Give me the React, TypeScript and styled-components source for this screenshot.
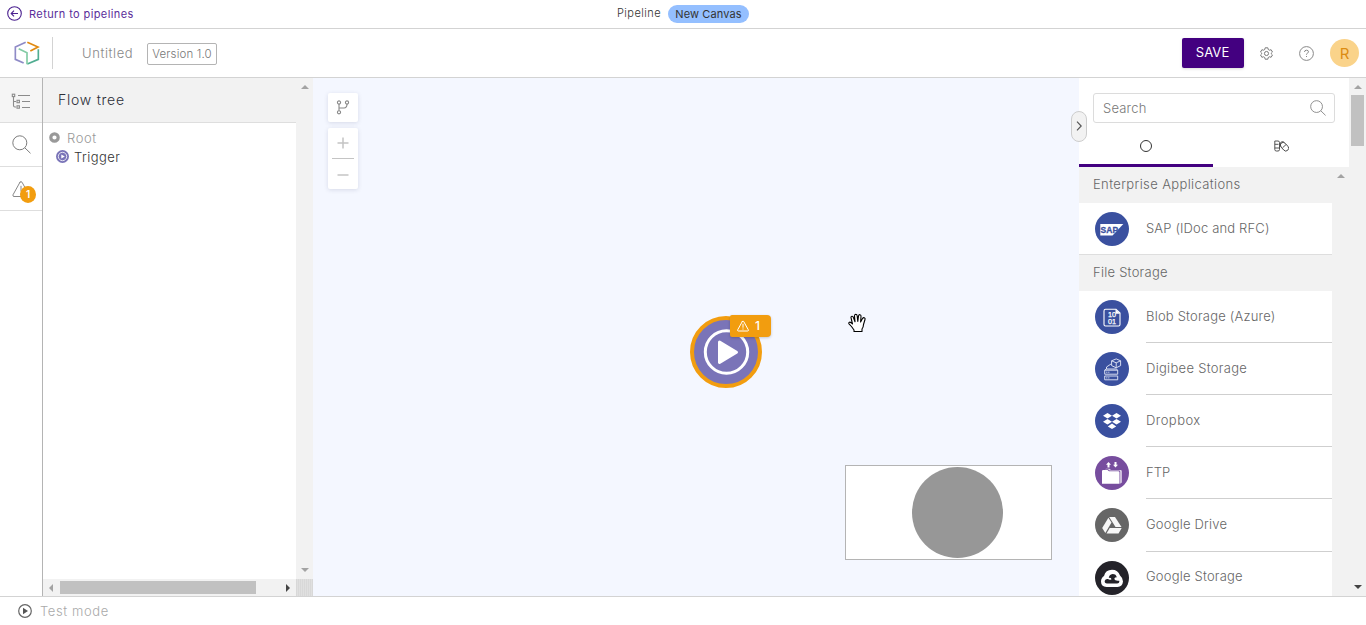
import React from "react";
import styled, { createGlobalStyle } from "styled-components";

const GlobalStyle = createGlobalStyle`
  * { box-sizing: border-box; }
  html, body { margin: 0; overflow: hidden; }
  body {
    font-family: Inter, "Open Sans", "Liberation Sans", sans-serif;
    font-weight: 300;
    color: #666;
    background: #fff;
  }
  svg { display: block; flex: none; }
`;

const Page = styled.div`
  display: flex;
  flex-direction: column;
  width: 1366px;
  height: 625px;
  background: #fff;
`;

const Label = styled.span<{ $size: number; $spacing?: number; $color?: string; $weight?: number }>`
  font-size: ${(p) => p.$size}px;
  letter-spacing: ${(p) => p.$spacing ?? 0}px;
  color: ${(p) => p.$color ?? "#666"};
  font-weight: ${(p) => p.$weight ?? 300};
  line-height: 18px;
  white-space: nowrap;
`;

const TopBar = styled.header`
  display: grid;
  grid-template-columns: 617px 1fr;
  height: 29px;
  flex: none;
  border-bottom: 1px solid #d3d3d3;
`;

const ReturnLink = styled.a`
  display: flex;
  align-items: center;
  gap: 7px;
  padding: 0 0 1px 7px;
`;

const Crumb = styled.div`
  display: flex;
  align-items: center;
  gap: 7px;
  padding-bottom: 1px;
`;

const CrumbText = styled.div`
  display: flex;
  width: 44px;
  padding-bottom: 2px;
`;

const CanvasPill = styled.div`
  display: flex;
  align-items: center;
  justify-content: center;
  width: 81px;
  height: 18px;
  border-radius: 9px;
  background: #94bfff;
`;

const Header = styled.div`
  display: flex;
  align-items: center;
  height: 49px;
  flex: none;
  border-bottom: 1px solid #d3d3d3;
`;

const LogoBox = styled.div`
  display: flex;
  align-items: center;
  width: 53px;
  height: 32px;
  padding-left: 14px;
  border-right: 1px solid #d3d3d3;
`;

const Title = styled.div`
  display: flex;
  width: 94px;
  padding: 0 0 1px 29px;
`;

const Version = styled.div`
  display: flex;
  align-items: center;
  justify-content: center;
  width: 70px;
  height: 22px;
  margin-top: 2px;
  border: 1px solid #b4b4b4;
  border-radius: 2px;
`;

const HeaderActions = styled.div`
  display: flex;
  align-items: center;
  margin-left: auto;
  padding-right: 7px;
`;

const SaveButton = styled.button`
  width: 62px;
  height: 30px;
  margin-right: 16px;
  padding: 0 1px 2px 0;
  border: 0;
  border-radius: 2px;
  background: #430080;
  box-shadow: 0 1px 3px rgba(0, 0, 0, 0.15);
  color: #fff;
  font: 400 13px Inter, sans-serif;
  letter-spacing: 0.1px;
`;

const HelpSlot = styled.div`
  margin: 0 16px 0 26px;
`;

const Avatar = styled.div`
  display: flex;
  align-items: center;
  justify-content: center;
  width: 29px;
  height: 28px;
  border-radius: 50%;
  background: #fad38a;
  color: #dc8c12;
  font-size: 15px;
  font-weight: 400;
`;

const Main = styled.main`
  display: flex;
  height: 518px;
  flex: none;
`;

const Rail = styled.nav`
  width: 43px;
  border-right: 1px solid #b4b4b4;
`;

const RailItem = styled.div<{ $active?: boolean; $h: number }>`
  position: relative;
  display: flex;
  align-items: center;
  height: ${(p) => p.$h}px;
  padding: ${(p) => (p.$active ? "2px 0 0 11px" : "0 0 0 12px")};
  background: ${(p) => (p.$active ? "#f5f5f5" : "#fff")};
  border-bottom: 1px solid #dedede;
`;

const RailBadge = styled.span`
  position: absolute;
  left: 20px;
  top: 19px;
  width: 16px;
  height: 17px;
  border-radius: 50%;
  background: #f29d0f;
  color: #fff;
  font-size: 10px;
  font-weight: 600;
  line-height: 17px;
  text-align: center;
`;

const TreePanel = styled.aside`
  display: grid;
  grid-template-columns: 253px 17px;
  grid-template-rows: 501px 17px;
`;

const TreeHeader = styled.div`
  display: flex;
  align-items: center;
  height: 45px;
  padding-left: 15px;
  background: #f2f2f2;
  border-bottom: 1px solid #dedede;
`;

const TreeBody = styled.div`
  padding: 5px 0 0 6px;
`;

const TreeNode = styled.div<{ $indent: number; $gap: number }>`
  display: flex;
  align-items: center;
  gap: ${(p) => p.$gap}px;
  height: 19px;
  padding-left: ${(p) => p.$indent}px;
`;

const ScrollV = styled.div`
  display: flex;
  flex-direction: column;
  align-items: center;
  justify-content: space-between;
  padding: 7px 0;
  background: #f2f2f2;
`;

const ScrollH = styled.div`
  display: flex;
  align-items: center;
  padding: 0 6px;
  background: #f2f2f2;
`;

const ThumbH = styled.div`
  width: 196px;
  height: 13px;
  margin: 0 auto 0 7px;
  background: #c1c1c1;
`;

const Corner = styled.div`
  background: repeating-linear-gradient(90deg, #d8d8d8 0 1px, #e0e0e0 1px 2px);
`;

const Canvas = styled.section`
  position: relative;
  width: 766px;
  padding: 15px;
  background: #f4f7ff;
`;

const ToolCard = styled.div<{ $h: number }>`
  display: flex;
  flex-direction: column;
  align-items: center;
  justify-content: center;
  width: 30px;
  height: ${(p) => p.$h}px;
  margin-bottom: 6px;
  background: #fff;
  border-radius: 2px;
  box-shadow: 0 1px 4px rgba(60, 70, 110, 0.16);
`;

const ZoomButton = styled.div<{ $line?: boolean }>`
  display: flex;
  align-items: center;
  justify-content: center;
  width: 22px;
  height: ${(p) => (p.$line ? 31 : 30)}px;
  padding-top: ${(p) => (p.$line ? 0 : 2)}px;
  border-bottom: ${(p) => (p.$line ? "1px solid #c4c4c4" : "0")};
`;

const TriggerNode = styled.div`
  position: absolute;
  left: 377px;
  top: 238px;
  width: 72px;
  height: 72px;
`;

const NodeBadge = styled.div`
  position: absolute;
  left: 40px;
  top: -1px;
  display: flex;
  align-items: center;
  gap: 6px;
  width: 41px;
  height: 22px;
  padding-left: 7px;
  border-radius: 2px 4px 4px 2px;
  background: #f29d0f;
  box-shadow: 0 1px 3px rgba(0, 0, 0, 0.2);
`;

const HandCursor = styled.svg`
  position: absolute;
  left: 535px;
  top: 235px;
`;

const MiniMap = styled.div`
  position: absolute;
  left: 532px;
  top: 387px;
  width: 207px;
  height: 95px;
  padding: 1px 0 0 66px;
  background: #fff;
  border: 1px solid #b4b4b4;
`;

const MiniDot = styled.div`
  width: 91px;
  height: 91px;
  border-radius: 50%;
  background: #979797;
`;

const SidePanel = styled.aside`
  position: relative;
  display: flex;
  width: 287px;
`;

const Collapse = styled.div`
  position: absolute;
  z-index: 1;
  left: -8px;
  top: 33px;
  display: flex;
  align-items: center;
  justify-content: center;
  width: 16px;
  height: 31px;
  padding-bottom: 1px;
  border: 1px solid #cdcdcd;
  border-radius: 8px;
  background: #f2f2f2;
`;

const SideContent = styled.div`
  width: 270px;
  height: 518px;
  overflow: hidden;
`;

const SearchBox = styled.div`
  display: flex;
  align-items: center;
  justify-content: space-between;
  width: 242px;
  height: 30px;
  margin: 15px 0 0 14px;
  padding: 0 8px 0 9px;
  border: 1px solid #dcdcdc;
  border-radius: 3px;
`;

const Tabs = styled.div`
  display: grid;
  grid-template-columns: 134px 136px;
  height: 44px;
`;

const Tab = styled.div<{ $active?: boolean }>`
  display: flex;
  align-items: center;
  justify-content: center;
  padding-top: 5px;
  border-bottom: 3px solid ${(p) => (p.$active ? "#430080" : "transparent")};
`;

const ListArea = styled.div`
  display: grid;
  grid-template-columns: 253px 17px;
  height: 429px;
`;

const List = styled.div`
  height: 429px;
  overflow: hidden;
`;

const SectionTitle = styled.div`
  display: flex;
  align-items: center;
  height: 36px;
  padding: 0 0 3px 14px;
  background: #f2f2f2;
`;

const Row = styled.div<{ $h: number; $full?: boolean }>`
  display: flex;
  gap: 16px;
  height: ${(p) => p.$h}px;
  padding-left: 16px;
  border-bottom: ${(p) => (p.$full ? "1px solid #dedede" : "0")};
`;

const RowIcon = styled.div`
  display: flex;
  align-items: center;
`;

const RowText = styled.div<{ $line?: boolean }>`
  display: flex;
  flex: 1;
  align-items: center;
  padding-bottom: 2px;
  margin-left: 1px;
  border-bottom: ${(p) => (p.$line ? "1px solid #cfcfcf" : "0")};
`;

const ScrollRight = styled.div`
  display: flex;
  flex-direction: column;
  align-items: center;
  width: 17px;
  padding: 7px 0;
  background: #f2f2f2;
`;

const ThumbV = styled.div`
  width: 13px;
  height: 51px;
  margin: 6px 0 auto;
  background: #c1c1c1;
`;

const Footer = styled.footer`
  display: flex;
  align-items: center;
  gap: 8px;
  height: 29px;
  flex: none;
  padding: 0 0 1px 18px;
  border-top: 1px solid #d3d3d3;
`;

type Dir = "up" | "down" | "left" | "right";
const arrowPoints: Record<Dir, string> = {
  up: "0,6 4,2 8,6",
  down: "0,2 8,2 4,6",
  left: "6,0 2,4 6,8",
  right: "2,0 6,4 2,8",
};

function Arrow({ dir, color = "#a3a3a3" }: { dir: Dir; color?: string }) {
  const vertical = dir === "up" || dir === "down";
  return (
    <svg width={vertical ? 8 : 4} height={vertical ? 4 : 8} viewBox={vertical ? "0 2 8 4" : "2 0 4 8"}>
      <polygon points={arrowPoints[dir]} fill={color} />
    </svg>
  );
}

function SearchIcon({ size }: { size: number }) {
  return (
    <svg width={size} height={size} viewBox="0 0 19 19" fill="none" stroke="#7c7c7c" strokeWidth="1">
      <circle cx="7.8" cy="7.8" r="7" />
      <path d="M12.9 12.9 18.5 18.3" />
    </svg>
  );
}

function WarningIcon({ size, color, width }: { size: number; color: string; width: number }) {
  return (
    <svg width={size} height={size} viewBox="0 0 18 18" fill="none" stroke={color} strokeWidth={width} strokeLinejoin="round" strokeLinecap="round">
      <path d="M8 2.2 1 14.8Q.5 16.5 2 16.5H16Q17.5 16.5 17 14.8L10 2.2Q9 .8 8 2.2Z" />
      <path d="M9 6.2V11M9 13.3V13.8" />
    </svg>
  );
}

function CubeLogo() {
  return (
    <svg width="26" height="26" viewBox="0 0 78 78" fill="none" strokeWidth="5">
      <path d="M35 7 4 21V58L29 69" stroke="#8f8bc7" />
      <path d="M40 7 72 21 49 33" stroke="#e08a10" />
      <path d="M73 28V58L40 72" stroke="#50ad91" />
      <path d="M14 26 39 38V73" stroke="#83cba5" />
    </svg>
  );
}

type Kind = "sap" | "blob" | "digibee" | "dropbox" | "ftp" | "drive" | "gcs";

const discColors: Record<Kind, string> = {
  sap: "#3a509f",
  blob: "#3a509f",
  digibee: "#3a509f",
  dropbox: "#3a509f",
  ftp: "#774d9e",
  drive: "#666666",
  gcs: "#242329",
};

function Glyph({ kind }: { kind: Kind }) {
  switch (kind) {
    case "sap":
      return (
        <>
          <path d="M5.3 12H28.300L17.500 23.500H5.300Z" fill="#fff" />
          <text x="5.600" y="21" fill="#3a509f" stroke="#3a509f" strokeWidth=".3" fontFamily="Liberation Sans, sans-serif" fontWeight="700" fontSize="9.500" textLength="17.500" lengthAdjust="spacingAndGlyphs">SAP</text>
        </>
      );
    case "blob":
      return (
        <g fill="#fff">
          <path d="M10.500 9.300H21L25 13V24.500Q25 26 23.500 26H10.500Q9 26 9 24.500V11Q9 9.300 10.500 9.300Z" fill="none" stroke="#fff" strokeWidth="1.100" />
          <path d="M20.500 9.300 25.200 13.800H20.500Z" />
          <text x="13" y="17.200" stroke="#fff" strokeWidth=".25" fontFamily="Liberation Sans, sans-serif" fontSize="7.200">10</text>
          <text x="13" y="24.100" stroke="#fff" strokeWidth=".25" fontFamily="Liberation Sans, sans-serif" fontSize="7.200">01</text>
        </g>
      );
    case "digibee":
      return (
        <g fill="none" stroke="#e6eaf8" strokeWidth="0.900" strokeLinejoin="round">
          <path d="M9.700 18.200 11.200 17H21.200L22.700 18.200M9.700 18.200H22.700V22.200H9.700ZM9.700 24H22.700V27.800H9.700Z" />
          <path d="M11.200 20.200H14.500M11.200 25.900H14.500" strokeDasharray="1.200 .8" />
          <path d="M21.200 6.900 25.600 8.800V13.600L21.200 15.800 16.600 13.600V8.800ZM16.600 8.800 21.200 10.800 25.600 8.800M21.200 10.800V15.800M16 12 11.500 15V17" />
        </g>
      );
    case "dropbox":
      return (
        <path fill="#fff" d="m12.500 9 4.500 2.800-4.500 2.800L8 11.800ZM21.500 9l4.500 2.800-4.500 2.800-4.500-2.800ZM12.500 15l4.500 2.800-4.500 2.800L8 17.800ZM21.500 15l4.500 2.800-4.500 2.800-4.500-2.800ZM17 19.600l4.200 2.800L17 25.100l-4.200-2.700Z" />
      );
    case "ftp":
      return (
        <g fill="#fff">
          <path d="M7 15Q7 13.900 8.200 13.900H12.500L14 15.300H23.300Q24.500 15.300 24.500 16.500V27.700H7Z" />
          <path d="M10 13.200Q10.400 12.600 11.400 12.700H14.500L16 13.900H25.500Q26.800 13.900 26.800 15.200V26.500L25.200 27.700V15.700Q25.200 14.600 24 14.600H14.600L13 13.200Z" opacity=".8" />
          <path d="M13.500 6 16 8.700H14.500V11.400H12.500V8.700H11ZM19.500 6H21.500V8.700H23L20.500 11.500 18 8.700H19.500Z" />
        </g>
      );
    case "drive":
      return (
        <g fill="#f7f7f7">
          <path d="M14.200 9H20L26.500 19H20.500Z" />
          <path d="M13.400 9.800 16.500 14.600 10.300 25 7.200 20Z" />
          <path d="M14.700 20H26.700L23.500 25.500H11.500Z" />
        </g>
      );
    case "gcs":
      return (
        <>
          <path d="M11.500 26Q6 25.500 6 20.500 6 17 9 15 10.500 8.800 17 8.800 23 8.800 25 14.500 28 17 28 20.500 27.500 25.500 22.500 26Z" fill="#fff" />
          <path d="M12 22.500Q9.400 22.300 9.700 20 10.300 17.600 13 18 14.800 19.500 16.500 18.200 15.800 16.400 13.800 17 14 13.500 17.600 13 21.200 13 21.800 16.400 19.500 16 19.300 18 20 20.300 24.300 19.700 24.700 22.200 22 22.500Z" fill="#242329" />
        </>
      );
  }
}

function Disc({ kind }: { kind: Kind }) {
  return (
    <svg width="34" height="34" viewBox="0 0 34 34">
      <circle cx="17" cy="17" r="17" fill={discColors[kind]} />
      <Glyph kind={kind} />
    </svg>
  );
}

const storage: { kind: Kind; name: string; spacing: number }[] = [
  { kind: "blob", name: "Blob Storage (Azure)", spacing: 0.2 },
  { kind: "digibee", name: "Digibee Storage", spacing: 0.3 },
  { kind: "dropbox", name: "Dropbox", spacing: 0.45 },
  { kind: "ftp", name: "FTP", spacing: 0 },
  { kind: "drive", name: "Google Drive", spacing: 0.2 },
  { kind: "gcs", name: "Google Storage", spacing: 0.2 },
];

export default function App() {
  return (
    <Page>
      <GlobalStyle />
      <TopBar>
        <ReturnLink>
          <svg width="15" height="15" viewBox="0 0 15 15" fill="none" stroke="#4b2190" strokeWidth="1.100">
            <circle cx="7.500" cy="7.500" r="6.800" />
            <path d="M11 7.500H4.300M7 4.700 4.200 7.500 7 10.300" />
          </svg>
          <Label $size={11} $spacing={0.4} $color="#5a2d9a" $weight={400}>Return to pipelines</Label>
        </ReturnLink>
        <Crumb>
          <CrumbText><Label $size={11} $spacing={0.45} $color="#333">Pipeline</Label></CrumbText>
          <CanvasPill>
            <Label $size={11} $spacing={0.1} $color="#333" $weight={400}>New Canvas</Label>
          </CanvasPill>
        </Crumb>
      </TopBar>

      <Header>
        <LogoBox><CubeLogo /></LogoBox>
        <Title><Label $size={13} $spacing={0.6} $color="#888">Untitled</Label></Title>
        <Version><Label $size={11.5} $spacing={0.15} $color="#777">Version 1.0</Label></Version>
        <HeaderActions>
          <SaveButton>SAVE</SaveButton>
          <svg width="13" height="13" viewBox="0 0 24 24" fill="none" stroke="#777" strokeWidth="1.800" strokeLinejoin="round">
            <path d="M9.500 1.500H14.500L15.200 4.600 17.500 5.900 20.500 5 23 9.300 20.700 11.500V12.500L23 14.700 20.500 19 17.500 18.100 15.200 19.400 14.500 22.500H9.500L8.800 19.400 6.500 18.100 3.500 19 1 14.700 3.300 12.500V11.500L1 9.300 3.500 5 6.500 5.900 8.800 4.600Z" />
            <circle cx="12" cy="12" r="3.800" />
          </svg>
          <HelpSlot>
            <svg width="15" height="15" viewBox="0 0 15 15" fill="none" stroke="#888" strokeWidth="1">
              <circle cx="7.500" cy="7.500" r="6.900" />
              <path d="M5.500 6Q5.500 4.200 7.500 4.200 9.500 4.200 9.500 5.800 9.500 6.700 8.400 7.200 7.500 7.600 7.500 8.700M7.500 10V11" />
            </svg>
          </HelpSlot>
          <Avatar>R</Avatar>
        </HeaderActions>
      </Header>

      <Main>
        <Rail>
          <RailItem $active $h={45}>
            <svg width="20" height="16" viewBox="0 0 20 16" fill="none" stroke="#8b8b8b" strokeWidth="1.100">
              <path d="M7 2.500H19M11 8.500H19M11 14.500H19M2.500 4V12.500Q2.500 14 4 14H5M2.500 8.500H5" />
              <rect x="1.300" y="1.200" width="2.400" height="2.400" />
              <rect x="6" y="7.300" width="2.400" height="2.400" />
              <rect x="6" y="12.800" width="2.400" height="2.400" />
            </svg>
          </RailItem>
          <RailItem $h={44}><SearchIcon size={19} /></RailItem>
          <RailItem $h={44}>
            <WarningIcon size={18} color="#888" width={1} />
            <RailBadge>1</RailBadge>
          </RailItem>
        </Rail>

        <TreePanel>
          <div>
            <TreeHeader><Label $size={14} $spacing={0.75} $color="#2b2f38">Flow tree</Label></TreeHeader>
            <TreeBody>
              <TreeNode $indent={0} $gap={7}>
                <svg width="11" height="11" viewBox="0 0 11 11"><circle cx="5.500" cy="5.500" r="3.700" fill="#fff" stroke="#999" strokeWidth="3.200" /></svg>
                <Label $size={13} $spacing={0.6} $color="#999">Root</Label>
              </TreeNode>
              <TreeNode $indent={7} $gap={5}>
                <svg width="13" height="13" viewBox="0 0 13 13">
                  <circle cx="6.500" cy="6.500" r="6.500" fill="#7a74b8" />
                  <circle cx="6.500" cy="6.500" r="4.200" fill="none" stroke="#fff" strokeWidth=".8" />
                  <path d="M5.300 4.400 8.800 6.500 5.300 8.600Z" fill="#fff" />
                </svg>
                <Label $size={13} $spacing={0.45} $color="#333">Trigger</Label>
              </TreeNode>
            </TreeBody>
          </div>
          <ScrollV><Arrow dir="up" /><Arrow dir="down" /></ScrollV>
          <ScrollH><Arrow dir="left" /><ThumbH /><Arrow dir="right" color="#444" /></ScrollH>
          <Corner />
        </TreePanel>

        <Canvas>
          <ToolCard $h={29}>
            <svg width="14" height="16" viewBox="0 0 14 16" fill="none" stroke="#888" strokeWidth="1.100">
              <circle cx="3" cy="2.500" r="1.600" />
              <circle cx="11" cy="2.500" r="1.600" />
              <circle cx="3" cy="12.300" r="1.600" />
              <path d="M3 4.100V10.700M11 4.100Q11 8 8 8H3.500" />
            </svg>
          </ToolCard>
          <ToolCard $h={61}>
            <ZoomButton $line>
              <svg width="12" height="12" viewBox="0 0 12 12" stroke="#c4c4c4" strokeWidth="1.500"><path d="M6 .5V11.500M.5 6H11.500" /></svg>
            </ZoomButton>
            <ZoomButton>
              <svg width="12" height="12" viewBox="0 0 12 12" stroke="#c4c4c4" strokeWidth="1.500"><path d="M.5 6H11.500" /></svg>
            </ZoomButton>
          </ToolCard>

          <TriggerNode>
            <svg width="72" height="72" viewBox="0 0 72 72">
              <circle cx="36" cy="36" r="34" fill="#7a74b8" stroke="#f29d0f" strokeWidth="4" />
              <circle cx="36.500" cy="36" r="21.200" fill="none" stroke="#fff" strokeWidth="3" />
              <path d="M29.500 26 46.500 36.200 29.500 46.500Z" fill="#fff" stroke="#fff" strokeWidth="3" strokeLinejoin="round" />
            </svg>
            <NodeBadge>
              <WarningIcon size={12} color="#fff" width={1.5} />
              <Label $size={12} $color="#fff" $weight={500}>1</Label>
            </NodeBadge>
          </TriggerNode>

          <HandCursor width="19" height="20" viewBox="0 0 19 20" fill="#fff" stroke="#000" strokeWidth="1.100" strokeLinejoin="round">
            <path d="M6 18.500V17L3.500 13.500 1 10.800Q.3 9.700 1.500 9.200 2.700 8.900 4.500 11L3.200 5.500Q2.500 3.500 4 3.200 5 3 5.600 5L7 8.800 6.500 3Q6.400 1.300 7.700 1.200 9 1.200 9.200 3L9.800 8.500 10.500 3Q10.800 1.500 12 1.700 13.200 1.900 13 3.500L12.600 9 14.500 5.600Q15.300 4.300 16.300 4.700 17.500 5.200 17 6.500L15.500 11.500Q15.500 14 14 16V18.500Z" />
          </HandCursor>

          <MiniMap><MiniDot /></MiniMap>
        </Canvas>

        <SidePanel>
          <Collapse>
            <svg width="6" height="10" viewBox="0 0 6 10" fill="none" stroke="#555" strokeWidth="1.200"><path d="M1 .7 5.200 5 1 9.300" /></svg>
          </Collapse>
          <SideContent>
            <SearchBox>
              <Label $size={13} $spacing={0.2} $color="#777">Search</Label>
              <SearchIcon size={16} />
            </SearchBox>
            <Tabs>
              <Tab $active>
                <svg width="12" height="12" viewBox="0 0 12 12"><circle cx="6" cy="6" r="5.500" fill="none" stroke="#333" strokeWidth="1" /></svg>
              </Tab>
              <Tab>
                <svg width="15" height="12" viewBox="0 0 15 12" fill="none" stroke="#444" strokeWidth=".9">
                  <path d="M.8 1H4Q5.500 1 5.500 2.600V9.500Q5.500 11 4 11H2.300Q.8 11 .8 9.500ZM.8 4.300H4.500M.8 8H5.500" />
                  <path d="M6.800 6.500Q5.600 3.500 6.800 2.300 8.500 .8 10.300 2.500" />
                  <rect x="7.700" y="1.900" width="5.600" height="9.600" rx="2.800" transform="rotate(-42 10.500 6.700)" />
                  <path d="M8.500 7.800 12 4.600" />
                </svg>
              </Tab>
            </Tabs>
            <ListArea>
              <List>
                <SectionTitle><Label $size={13} $spacing={0.37}>Enterprise Applications</Label></SectionTitle>
                <Row $h={52} $full>
                  <RowIcon><Disc kind="sap" /></RowIcon>
                  <RowText><Label $size={13} $spacing={0.15}>SAP (IDoc and RFC)</Label></RowText>
                </Row>
                <SectionTitle><Label $size={13} $spacing={0.25}>File Storage</Label></SectionTitle>
                {storage.map((s) => (
                  <Row key={s.kind} $h={52.12}>
                    <RowIcon><Disc kind={s.kind} /></RowIcon>
                    <RowText $line><Label $size={13} $spacing={s.spacing}>{s.name}</Label></RowText>
                  </Row>
                ))}
              </List>
              <ScrollV><Arrow dir="up" /></ScrollV>
            </ListArea>
          </SideContent>
          <ScrollRight><Arrow dir="up" /><ThumbV /><Arrow dir="down" color="#444" /></ScrollRight>
        </SidePanel>
      </Main>

      <Footer>
        <svg width="14" height="14" viewBox="0 0 14 14">
          <circle cx="7" cy="7" r="6.300" fill="none" stroke="#666" strokeWidth="1.200" />
          <path d="M5 3.800 10 7 5 10.200Z" fill="#555" />
        </svg>
        <Label $size={13} $spacing={0.6} $color="#aaa">Test mode</Label>
      </Footer>
    </Page>
  );
}
